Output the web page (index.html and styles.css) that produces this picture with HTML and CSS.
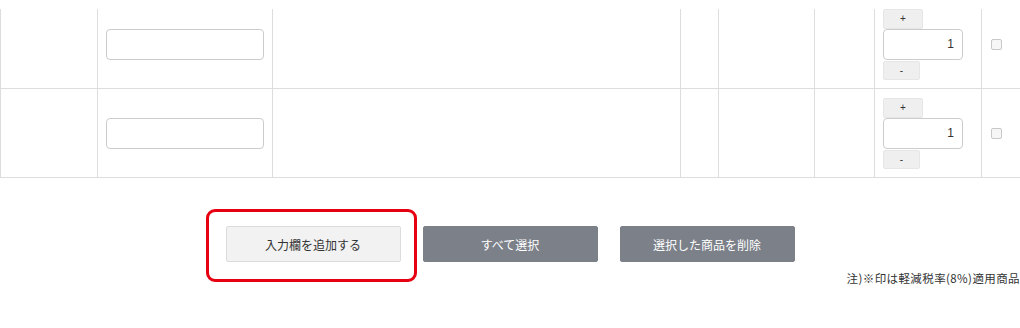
FILE: index.html
```html
<!DOCTYPE html>
<html lang="ja">
<head>
  <meta charset="UTF-8">
  <title>カート</title>
  <link rel="stylesheet" href="styles.css">
</head>
<body>
  <div class="table-clip">
    <table class="cart-table">
      <colgroup>
        <col style="width:97px">
        <col style="width:175px">
        <col style="width:408px">
        <col style="width:38px">
        <col style="width:96px">
        <col style="width:60px">
        <col style="width:107px">
        <col style="width:60px">
      </colgroup>
      <tr>
        <td></td>
        <td><input type="text" class="code-input"></td>
        <td></td>
        <td></td>
        <td></td>
        <td></td>
        <td>
          <div class="qty">
            <button class="qty-btn plus">+</button>
            <input type="text" class="qty-input" value="1">
            <button class="qty-btn minus">-</button>
          </div>
        </td>
        <td><span class="check"></span></td>
      </tr>
      <tr>
        <td></td>
        <td><input type="text" class="code-input"></td>
        <td></td>
        <td></td>
        <td></td>
        <td></td>
        <td>
          <div class="qty">
            <button class="qty-btn plus">+</button>
            <input type="text" class="qty-input" value="1">
            <button class="qty-btn minus">-</button>
          </div>
        </td>
        <td><span class="check"></span></td>
      </tr>
    </table>
  </div>

  <div class="actions">
    <span class="highlight"><button class="btn btn-light">入力欄を追加する</button></span>
    <button class="btn btn-gray">すべて選択</button>
    <button class="btn btn-gray">選択した商品を削除</button>
  </div>

  <p class="note">注)※印は軽減税率(8%)適用商品</p>
</body>
</html>
```

FILE: styles.css
```css
* {
  margin: 0;
  padding: 0;
  box-sizing: border-box;
}

body {
  font-family: "Noto Sans CJK JP", "Liberation Sans", sans-serif;
  color: #333;
  background: #fff;
  width: 1020px;
  overflow: hidden;
  padding-top: 9px;
}

/* top of the first row is scrolled out of view */
.table-clip {
  overflow: hidden;
}

.cart-table {
  margin-top: -10px;
  border-collapse: collapse;
  table-layout: fixed;
  width: 1041px;
}

.cart-table td {
  border: 1px solid #ddd;
  height: 89px;
  padding: 0 8px;
  vertical-align: middle;
}

.code-input {
  display: block;
  width: 158px;
  height: 31px;
  border: 1px solid #ccc;
  border-radius: 4px;
  background: #fff;
}

.qty {
  display: flex;
  flex-direction: column;
  align-items: flex-start;
}

.qty-btn {
  height: 20px;
  background: #efefef;
  border: 1px solid #e6e6e6;
  border-radius: 2px;
  font-family: "Liberation Sans", sans-serif;
  font-size: 10px;
  color: #333;
}

.qty-btn.plus {
  width: 40px;
}

.qty-btn.minus {
  width: 37px;
  height: 19px;
  margin-top: 1px;
}

.qty-input {
  width: 80px;
  height: 31px;
  border: 1px solid #ccc;
  border-radius: 4px;
  text-align: right;
  padding-right: 8px;
  font-family: "Liberation Sans", sans-serif;
  font-size: 12px;
  color: #333;
}

.check {
  display: block;
  width: 11px;
  height: 11px;
  margin-left: 1px;
  border: 1px solid #c8c8c8;
  border-radius: 2px;
  background: #f6f6f6;
}

.actions {
  display: flex;
  justify-content: center;
  gap: 22px;
  margin-top: 48px;
}

.highlight {
  position: relative;
  display: block;
}

.highlight::after {
  content: "";
  position: absolute;
  left: -20px;
  top: -17px;
  right: -16px;
  bottom: -20px;
  border: 3px solid #e60012;
  border-radius: 9px;
}

.btn {
  display: block;
  width: 175px;
  height: 36px;
  border-radius: 2px;
  font-family: "Noto Sans CJK JP", sans-serif;
  font-size: 12px;
}

.btn-light {
  background: #f2f2f2;
  border: 1px solid #dcdcdc;
  color: #333;
}

.btn-gray {
  background: #7b8089;
  border: 1px solid #7b8089;
  color: #fff;
}

.note {
  text-align: right;
  font-size: 11.5px;
  letter-spacing: 0.4px;
  line-height: 14px;
  margin-top: 9px;
  color: #333;
}
```
